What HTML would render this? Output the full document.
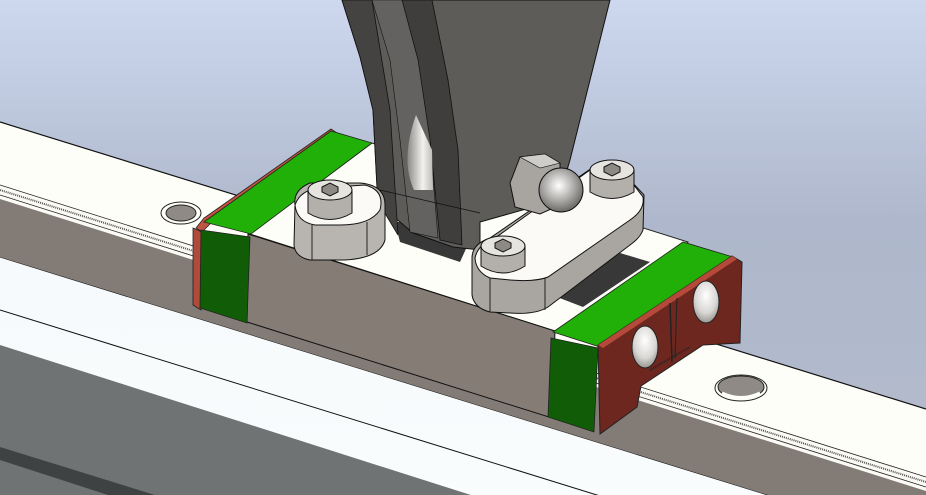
<!DOCTYPE html>
<html><head><meta charset="utf-8"><style>html,body{margin:0;padding:0;width:926px;height:495px;overflow:hidden;background:#b0b8cb}svg{display:block;position:absolute;left:0;top:0}</style></head>
<body>
<svg width="926" height="495" viewBox="0 0 926 495" xmlns="http://www.w3.org/2000/svg">
<defs>
<linearGradient id="sky" x1="0" y1="0" x2="0" y2="1">
<stop offset="0" stop-color="#cdd8ef"/><stop offset="0.45" stop-color="#aeb7cb"/><stop offset="1" stop-color="#b4bccd"/></linearGradient>
<linearGradient id="lowwhite" x1="0" y1="0" x2="0" y2="1"><stop offset="0" stop-color="#f6fafc"/><stop offset="0.7" stop-color="#fafcfd"/><stop offset="1" stop-color="#9ea3a5"/></linearGradient>
<radialGradient id="dome" cx="0.45" cy="0.4" r="0.6"><stop offset="0" stop-color="#ffffff"/><stop offset="0.6" stop-color="#a9a7a4"/><stop offset="1" stop-color="#6b6967"/></radialGradient>
<radialGradient id="pscrew" cx="0.5" cy="0.35" r="0.7"><stop offset="0" stop-color="#ffffff"/><stop offset="0.6" stop-color="#d8d6d3"/><stop offset="1" stop-color="#8a8784"/></radialGradient>
<linearGradient id="cone" x1="0" y1="0" x2="1" y2="0"><stop offset="0" stop-color="#8c8a87"/><stop offset="0.6" stop-color="#f4f2ef"/><stop offset="1" stop-color="#bdbab6"/></linearGradient>
</defs>
<rect width="926" height="495" fill="url(#sky)"/>
<polygon points="0,335 926,622 926,495 0,495" fill="#6f7374"/>
<polygon points="0,447 926,734 926,760 0,460" fill="#3f4243"/>
<polygon points="0,257 926,544 926,640 0,345" fill="url(#lowwhite)"/>
<line x1="0" y1="310" x2="926" y2="597" stroke="#111" stroke-width="1"/>
<line x1="0" y1="257" x2="926" y2="544" stroke="#111" stroke-width="1"/>
<polygon points="0,197 926,490 926,544 0,257" fill="#837b76"/>
<polygon points="0,184 926,476 926,491 0,199" fill="#fbfaf5"/>
<line x1="0" y1="190" x2="926" y2="482" stroke="#555" stroke-width="2" stroke-dasharray="1 1"/>
<line x1="0" y1="195" x2="926" y2="487" stroke="#222" stroke-width="0.8"/>
<polygon points="0,122 926,409 926,477 0,185" fill="#fefef8"/>
<line x1="0" y1="122" x2="926" y2="409" stroke="#111" stroke-width="1.2"/>
<line x1="0" y1="185" x2="926" y2="477" stroke="#222" stroke-width="0.8"/>
<ellipse cx="181" cy="213" rx="20" ry="11" fill="#fefef8" stroke="#222"/>
<ellipse cx="181" cy="213" rx="15" ry="8" fill="#8f8a85" stroke="#222"/>
<ellipse cx="741" cy="388" rx="26" ry="13" fill="#fefef8" stroke="#222"/>
<ellipse cx="741" cy="387" rx="23" ry="11" fill="#8f8a85" stroke="#222"/>
<path d="M722,393 Q741,402 760,393" stroke="#fefef8" stroke-width="3" fill="none"/>

<polygon points="250,234 372,143 688,242 555,331" fill="#fefef8" stroke="#222" stroke-width="1"/>
<polygon points="395,222 430,222 470,240 460,262 400,242" fill="#383838"/>
<polygon points="620,253 650,262 583,307 557,297" fill="#383838"/>
<polygon points="248,234 555,331 552,418 247,322" fill="#857c76" stroke="#111" stroke-width="1"/>
<polygon points="196,228 204,218 331,129 337,133 210,224 202,232" fill="#c05442" stroke="#222" stroke-width="0.8"/>
<polygon points="193,228 202,232 201,310 193,305" fill="#b04a3a" stroke="#222" stroke-width="0.8"/>
<polygon points="204,222 331,131 372,143 251,234" fill="#21b007" stroke="#222" stroke-width="0.8"/>
<polygon points="201,230 250,237 247,323 200,308" fill="#115c06" stroke="#222" stroke-width="0.8"/>
<polygon points="553,332 683,242 733,257 600,347" fill="#21b007" stroke="#222" stroke-width="0.8"/>
<polygon points="551,338 598,348 594,432 548,417" fill="#115c06" stroke="#222" stroke-width="0.8"/>
<polygon points="598,345 732,256 742,262 740,343 703,345 641,386 637,407 600,434" fill="#6e271f" stroke="#222" stroke-width="1"/>
<polygon points="598,345 732,256 737,259 603,348" fill="#b54a3b"/>
<line x1="670" y1="303" x2="672" y2="362" stroke="#222" stroke-width="1.5"/>
<line x1="677" y1="298" x2="675" y2="358" stroke="#222" stroke-width="1"/>
<line x1="650" y1="370" x2="690" y2="347" stroke="#222" stroke-width="2" stroke-dasharray="1 1"/>
<ellipse cx="645" cy="347" rx="13" ry="21" fill="url(#pscrew)" stroke="#222"/>
<ellipse cx="706" cy="302" rx="13" ry="21" fill="url(#pscrew)" stroke="#222"/>

<polygon points="342,0 610,0 570,160 558,200 480,222 480,250 453,247 413,233 380,205 377,187 373,110 360,57" fill="#5d5c59" stroke="#111" stroke-width="1"/>
<polygon points="342,0 372,0 390,110 398,235 380,205 377,187 373,110 360,57" fill="#444342" stroke="#111" stroke-width="0.8"/>
<polygon points="402,0 432,0 448,80 458,150 462,245 440,240 430,140 418,60" fill="#3f3e3d" stroke="#111" stroke-width="0.8"/>
<polygon points="372,0 402,0 418,60 430,140 438,238 410,232 400,140 390,60" fill="#636260" stroke="#111" stroke-width="0.6"/>
<path d="M416,115 Q400,160 414,190 L433,190 L432,150 Z" fill="url(#cone)"/>
<line x1="380" y1="190" x2="480" y2="213" stroke="#111" stroke-width="0.8"/>

<path d="M295,205 Q293,190 310,183 L360,183 Q385,185 385,205 L385,240 Q380,258 345,260 L310,260 Q295,257 294,245 Z" fill="#b8b5b1" stroke="#111"/>
<path d="M295,205 Q300,190 320,188 L365,185 Q385,190 380,210 Q370,225 340,225 L315,225 Q297,222 295,205 Z" fill="#fbfaf6" stroke="#111"/>
<line x1="312" y1="225" x2="312" y2="260" stroke="#222"/>
<line x1="367" y1="222" x2="367" y2="255" stroke="#222"/>
<path d="M472,258 Q472,244 490,238 L592,168 Q610,163 630,180 L644,195 L643,230 Q640,238 630,245 L548,307 Q535,315 510,313 L490,312 Q474,308 472,295 Z" fill="#a9a6a2" stroke="#111"/>
<path d="M475,258 Q478,244 495,238 L590,170 Q610,163 630,180 L643,197 Q645,210 630,220 L548,277 Q535,282 510,280 L490,278 Q476,272 475,258 Z" fill="#fbfaf6" stroke="#111"/>
<line x1="490" y1="278" x2="490" y2="312" stroke="#222"/>
<line x1="545" y1="278" x2="545" y2="310" stroke="#222"/>
<g stroke="#111">
<path d="M308,190 L308,213 Q330,226 352,213 L352,190 Z" fill="#b3b0ac"/>
<ellipse cx="330" cy="190" rx="22" ry="10" fill="#e6e4df"/>
<polygon points="322,187 330,183 338,187 338,192 330,196 322,192" fill="#8d8a86"/>
<path d="M481,246 L481,266 Q503,280 525,266 L525,246 Z" fill="#b3b0ac"/>
<ellipse cx="503" cy="246" rx="22" ry="10" fill="#e6e4df"/>
<polygon points="495,243 503,239 511,243 511,248 503,252 495,248" fill="#8d8a86"/>
<path d="M590,170 L590,192 Q612,205 634,192 L634,170 Z" fill="#b3b0ac"/>
<ellipse cx="612" cy="170" rx="22" ry="10" fill="#e6e4df"/>
<polygon points="604,167 612,163 620,167 620,172 612,176 604,172" fill="#8d8a86"/>
</g>
<polygon points="510,183 520,157 545,154 560,163 560,205 540,214 515,207" fill="#a8a5a1" stroke="#111"/>
<polygon points="520,157 545,154 560,163 540,168" fill="#cfcdc9" stroke="#111" stroke-width="0.6"/>
<circle cx="561" cy="190" r="22" fill="url(#dome)" stroke="#111"/>
</svg>
</body></html>
